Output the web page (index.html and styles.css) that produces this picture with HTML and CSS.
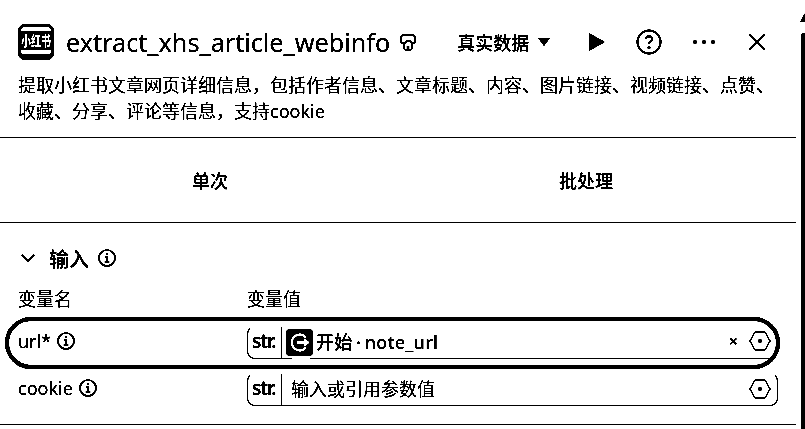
FILE: index.html
```html
<!DOCTYPE html>
<html lang="zh-CN">
<head>
  <meta charset="UTF-8">
  <meta name="viewport" content="width=device-width, initial-scale=1.0">
  <title>extract_xhs_article_webinfo</title>
  <link rel="stylesheet" href="styles.css">
</head>
<body>
  <div class="panel">
    <!-- Title bar -->
    <header class="header">
      <div class="logo"><div class="logo-band"><span>小红书</span></div></div>
      <h1 class="title">extract_xhs_article_webinfo</h1>
      <svg class="mask" width="16" height="17" viewBox="0 0 16 17" fill="none" stroke="#000" stroke-width="1.6">
        <path d="M1 8V4q0-3 3-3h8q3 0 3 3v4q0 1-1 1h-2l-2-2H7L5 9H2Q1 9 1 8z"/>
        <path d="M4 9v4q0 3 2 3h1.5v-4M12 9v4q0 3-2 3H8.5v-4"/>
      </svg>
      <div class="actions">
        <div class="mode">真实数据<span class="caret"></span></div>
        <svg class="play" width="18" height="18" viewBox="0 0 18 18"><path d="M1 0l16 9-16 9z"/></svg>
        <svg width="26" height="26" viewBox="0 0 26 26" fill="none" stroke="#000" stroke-width="2">
          <circle cx="13" cy="13" r="11.5"/>
          <path d="M9.8 10.2q.2-3 3.2-3t3.2 2.8q0 1.6-1.6 2.6T13 15.2"/>
          <circle cx="13" cy="18.6" r=".7"/>
        </svg>
        <svg class="dots" width="24" height="6" viewBox="0 0 24 6"><circle cx="3" cy="3" r="2"/><circle cx="12" cy="3" r="2"/><circle cx="21" cy="3" r="2"/></svg>
        <svg class="close" width="18" height="18" viewBox="0 0 18 18" stroke="#000" stroke-width="2"><path d="M1.5 1.5l15 15M16.5 1.5l-15 15"/></svg>
      </div>
    </header>

    <p class="desc">提取小红书文章网页详细信息，包括作者信息、文章标题、内容、图片链接、视频链接、点赞、收藏、分享、评论等信息，支持cookie</p>

    <!-- Tabs -->
    <nav class="tabs">
      <div class="tab">单次</div>
      <div class="tab">批处理</div>
    </nav>

    <!-- Input section -->
    <section class="inputs">
      <div class="section-head">
        <svg class="chevron" width="14" height="14" viewBox="0 0 14 14" fill="none" stroke="#000" stroke-width="2.2"><path d="M1 4l6 6 6-6"/></svg>
        <span>输入</span>
        <svg class="info" width="18" height="18" viewBox="0 0 18 18" fill="none" stroke="#000" stroke-width="1.7"><circle cx="9" cy="9" r="8"/><path d="M9 4.5v1.6M7.4 8h1.8v4.6M6.6 13h4.8"/></svg>
      </div>
      <div class="row labels">
        <div class="col-name">变量名</div>
        <div class="col-value">变量值</div>
      </div>
      <div class="row field highlight">
        <div class="col-name">url*<svg class="info" width="18" height="18" viewBox="0 0 18 18" fill="none" stroke="#000" stroke-width="1.7"><circle cx="9" cy="9" r="8"/><path d="M9 4.5v1.6M7.4 8h1.8v4.6M6.6 13h4.8"/></svg></div>
        <div class="col-value box">
          <span class="type">str.</span>
          <span class="ref-icon">
            <svg width="23" height="23" viewBox="0 0 23 23" fill="none" stroke="#fff" stroke-width="2.4"><path d="M18 6.5A8 8 0 1 0 18 16.5"/><path d="M9 11.5h11M16 8l4 3.5-4 3.5"/></svg>
          </span>
          <span class="value">开始 · note_url</span>
          <span class="clear">×</span>
          <svg class="hex" width="22" height="20" viewBox="0 0 22 20" fill="none" stroke="#000" stroke-width="1.2"><path d="M6 1h10l5 9-5 9H6l-5-9z"/><circle cx="11" cy="10" r="1.4" fill="#000"/></svg>
        </div>
      </div>
      <div class="row field">
        <div class="col-name">cookie<svg class="info" width="18" height="18" viewBox="0 0 18 18" fill="none" stroke="#000" stroke-width="1.7"><circle cx="9" cy="9" r="8"/><path d="M9 4.5v1.6M7.4 8h1.8v4.6M6.6 13h4.8"/></svg></div>
        <div class="col-value box">
          <span class="type">str.</span>
          <span class="placeholder">输入或引用参数值</span>
          <svg class="hex" width="22" height="20" viewBox="0 0 22 20" fill="none" stroke="#000" stroke-width="1.2"><path d="M6 1h10l5 9-5 9H6l-5-9z"/><circle cx="11" cy="10" r="1.4" fill="#000"/></svg>
        </div>
      </div>
    </section>
  </div>
  <div class="scrollbar"></div>
</body>
</html>
```

FILE: styles.css
```css
html {
  background: #fff;
}

body {
  margin: 0;
  width: 805px;
  height: 429px;
  overflow: hidden;
  position: relative;
  background: #fff;
  color: #000;
  font-family: "Noto Sans", "Noto Sans CJK SC", sans-serif;
  filter: grayscale(1) brightness(.75) contrast(1000%);
}

.panel {
  width: 796px;
}

.header {
  display: flex;
  align-items: center;
  height: 36px;
  padding: 24px 0 0 18px;
}

.logo {
  width: 36px;
  height: 36px;
  box-sizing: border-box;
  flex: none;
  background: #fff;
  border: 3px solid #000;
  border-bottom-width: 6px;
  border-radius: 7px;
  padding-top: 4px;
}

.logo-band {
  height: 19px;
  background: #000;
  color: #fff;
  font-size: 14px;
  font-weight: 900;
  line-height: 19px;
  text-align: center;
  white-space: nowrap;
  overflow: hidden;
}

.logo-band span {
  display: inline-block;
  width: 42px;
  margin-left: -6px;
  transform: scaleX(.72);
}

.title {
  margin: 0 0 0 12px;
  font-size: 25.2px;
  font-weight: 400;
  line-height: 36px;
  white-space: nowrap;
}

.mask {
  flex: none;
  margin-left: 10px;
}

.actions {
  display: flex;
  align-items: center;
  margin-left: 41px;
  gap: 31px;
}

.mode {
  display: flex;
  align-items: center;
  font-size: 18px;
  font-weight: 500;
  margin-right: 7px;
  white-space: nowrap;
}

.caret {
  width: 0;
  height: 0;
  margin-left: 9px;
  border: 6px solid transparent;
  border-top: 8px solid #000;
  border-bottom: 0;
}

.play {
  margin-right: -1px;
}

.dots {
  margin-left: -1px;
}

.close {
  margin-left: 1px;
}

.desc {
  margin: 12px 0 0 18px;
  font-size: 18px;
  line-height: 26px;
  height: 52px;
  width: 770px;
}

.tabs {
  display: grid;
  grid-template-columns: 1fr 1fr;
  margin-top: 13px;
  padding: 0 22px;
  border-top: 1px solid #000;
  border-bottom: 1px solid #000;
  height: 84px;
}

.tab {
  align-self: center;
  text-align: center;
  font-size: 18px;
  font-weight: 500;
}

.inputs {
  border-bottom: 1px solid #000;
  height: 201px;
}

.section-head {
  display: flex;
  align-items: center;
  gap: 9px;
  height: 32px;
  padding: 19px 0 0 21px;
  font-size: 20px;
  font-weight: 500;
}

.chevron {
  margin-right: 5px;
}

.row {
  display: flex;
  align-items: center;
  padding-left: 18px;
}

.labels {
  height: 26px;
  margin-top: 11px;
  padding-bottom: 2px;
}

.col-name {
  width: 229px;
  flex: none;
  display: flex;
  align-items: center;
  gap: 6px;
  font-size: 18px;
}

.col-value {
  font-size: 18px;
}

.field {
  height: 33px;
  margin-top: 4px;
}

.field .col-name,
.value,
.placeholder,
.clear {
  margin-bottom: 3px;
}

.highlight {
  height: 36px;
  margin: 4px 16px 0 5px;
  padding: 3px 0 5px 9px;
  border: 4px solid #000;
  border-radius: 26px;
}

.box {
  flex: 1;
  height: 33px;
  margin-right: 18px;
  display: flex;
  align-items: center;
  border: 1px solid #000;
  border-top-color: transparent;
  border-radius: 8px;
  box-sizing: border-box;
}

.highlight .box {
  margin-right: -2px;
  border-right-color: transparent;
}

.type {
  width: 34px;
  flex: none;
  height: 100%;
  box-sizing: border-box;
  border-right: 1px solid #000;
  padding-left: 4px;
  font-size: 19px;
  line-height: 28px;
  font-weight: 600;
  letter-spacing: -1px;
}

.ref-icon {
  position: relative;
  width: 27px;
  height: 27px;
  margin-left: 4px;
  background: #000;
  border-radius: 4px;
  display: flex;
  align-items: center;
  justify-content: center;
}

/* small break in the field underline below the icon */
.ref-icon::after {
  content: "";
  position: absolute;
  left: 6px;
  bottom: -3px;
  width: 18px;
  height: 2px;
  background: #fff;
}

.value {
  margin-left: 3px;
  font-weight: 500;
  letter-spacing: .3px;
  word-spacing: -1.5px;
}

.placeholder {
  margin-left: 9px;
}

.clear {
  margin-left: auto;
  font-size: 16px;
  font-weight: 700;
}

.hex {
  margin: 0 6px 2px 0;
}

.clear + .hex {
  margin-left: 11px;
}

.placeholder + .hex {
  margin-left: auto;
}

.scrollbar {
  position: absolute;
  top: 33px;
  right: 0;
  bottom: 0;
  width: 4px;
  background: #000;
  border-top-left-radius: 3px;
}

.scrollbar::before {
  content: "";
  position: absolute;
  top: -20px;
  left: -1px;
  border-left: 5px solid transparent;
  border-bottom: 9px solid #000;
}
```
